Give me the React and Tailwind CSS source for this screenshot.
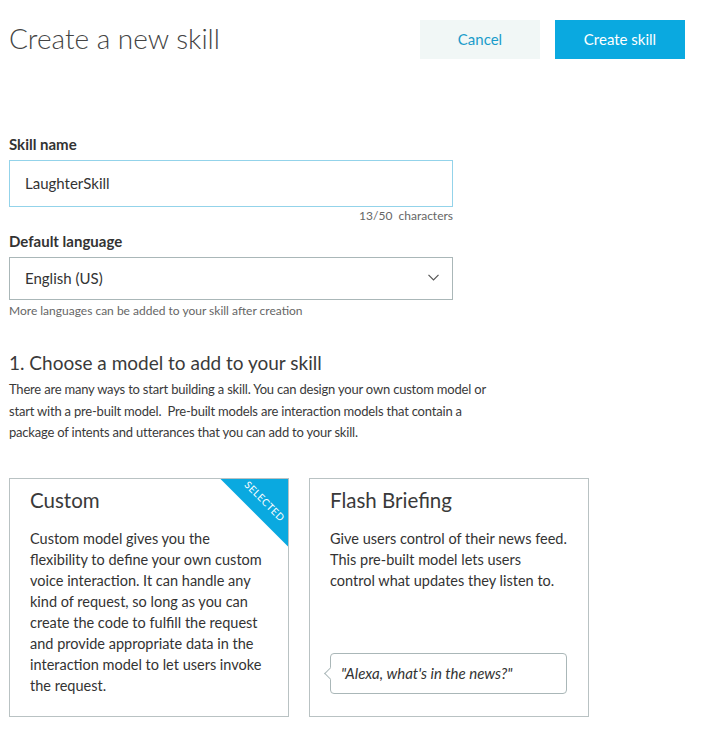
import React from 'react';

const Card = ({ title, selected, children, footer }) => (
  <div className="relative flex h-[239px] w-[280px] flex-col overflow-hidden border border-[#b9c2c3] bg-white pl-[20px] pr-[18px] pt-[7px] pb-[22px]">
    {selected && (
      <div className="absolute right-0 top-0 h-[68px] w-[68px] bg-[#0aa9e0] [clip-path:polygon(0_0,100%_0,100%_100%)]">
        <span className="absolute left-[16px] top-[17px] w-[58px] rotate-45 text-center text-[10px] uppercase leading-none tracking-[0.5px] text-white">
          Selected
        </span>
      </div>
    )}
    <h3 className="text-[20.5px] leading-[28px] text-[#3a3a3a]">{title}</h3>
    <p className="mt-[14px] w-[238px] text-[14.5px] leading-[21px] text-[#333]">{children}</p>
    {footer}
  </div>
);

const App = () => {
  return (
    <div className="min-h-screen bg-white px-[9px] font-['Lato',sans-serif] text-[#333]">
      <div className="w-[676px]">
        {/* Header */}
        <div className="flex h-[39px] items-center justify-between mt-[20px]">
          <h1 className="text-[28px] font-light leading-none text-[#444] -mt-[3px]">Create a new skill</h1>
          <div className="flex h-full gap-[15px]">
            <button className="h-full w-[120px] bg-[#f1f7f6] text-[15px] text-[#1a9cca]">Cancel</button>
            <button className="h-full w-[130px] bg-[#0aa9e0] text-[15px] text-white">Create skill</button>
          </div>
        </div>

        {/* Skill name */}
        <label className="mt-[75px] block text-[15px] font-bold leading-[20px] text-[#333]">Skill name</label>
        <div className="mt-[6px] flex h-[47px] w-[444px] items-center border border-[#93d3ea] px-[15px] text-[15px] text-[#333]">
          LaughterSkill
        </div>
        <div className="mt-[2px] w-[444px] text-right text-[12px] leading-[14px] text-[#666]">13/50&nbsp; characters</div>

        {/* Default language */}
        <label className="mt-[8px] block text-[15px] font-bold leading-[20px] text-[#333]">Default language</label>
        <div className="mt-[6px] flex h-[43px] w-[444px] items-center justify-between border border-[#aab7b8] pl-[15px] pr-[13px] text-[15px] text-[#333]">
          <span>English (US)</span>
          <svg width="11" height="7" viewBox="0 0 11 7" fill="none" className="-mt-[3px]">
            <path d="M0.5 0.8 5.5 5.8 10.5 0.8" stroke="#555" strokeWidth="1.2" />
          </svg>
        </div>
        <div className="mt-[4px] text-[12px] leading-[14px] text-[#666]">More languages can be added to your skill after creation</div>

        {/* Choose a model */}
        <h2 className="mt-[31px] text-[19px] leading-[28px] text-[#3a3a3a]">1. Choose a model to add to your skill</h2>
        <p className="mt-[2px] w-[500px] text-[13px] leading-[21.5px] tracking-[-0.2px] text-[#3a3a3a]">
          There are many ways to start building a skill. You can design your own custom model or start with a pre-built model.&nbsp; Pre-built models are interaction models that contain a package of intents and utterances that you can add to your skill.
        </p>

        <div className="mt-[34px] flex gap-[20px]">
          <Card title="Custom" selected>
            Custom model gives you the flexibility to define your own custom voice interaction. It can handle any kind of request, so long as you can create the code to fulfill the request and provide appropriate data in the interaction model to let users invoke the request.
          </Card>
          <Card
            title="Flash Briefing"
            footer={
              <div className="relative mt-auto flex h-[41px] w-[237px] items-center rounded-[4px] border border-[#aab7b8] bg-white pl-[10px] text-[15px] italic text-[#333]">
                <span className="absolute -left-[5px] top-[15px] h-[9px] w-[9px] rotate-45 border-b border-l border-[#aab7b8] bg-white" />
                "Alexa, what's in the news?"
              </div>
            }
          >
            Give users control of their news feed. This pre-built model lets users control what updates they listen to.
          </Card>
        </div>
      </div>
    </div>
  );
};

export default App;
